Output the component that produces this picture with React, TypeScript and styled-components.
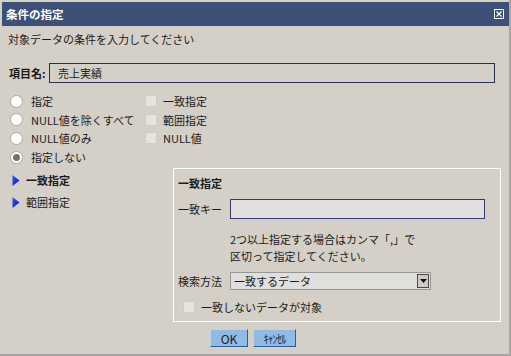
import { createGlobalStyle, styled } from "styled-components";

const GlobalStyle = createGlobalStyle`
  html, body {
    margin: 0;
    padding: 0;
    background: #d4d0c8;
  }
  body {
    font-family: "Noto Sans CJK JP", "Noto Sans", sans-serif;
    font-size: 11px;
    color: #1a1a1a;
  }
`;

const Dialog = styled.div`
  width: 511px;
  height: 356px;
  padding: 2px 0 0 2px;
  box-sizing: border-box;
  background: #d4d0c8;
  border-right: 2px solid #a8a6a2;
  border-bottom: 2px solid #a8a6a2;
  display: flex;
  flex-direction: column;
`;

const TitleBar = styled.div`
  height: 24px;
  background: #3d5078;
  color: #fff;
  font-weight: bold;
  font-size: 11.5px;
  display: flex;
  align-items: center;
  justify-content: space-between;
  padding: 0 5px 0 4px;
`;

const Body = styled.div`
  padding: 5px 0 0 6px;
  display: flex;
  flex-direction: column;
`;

const Intro = styled.div`
  line-height: 16px;
  height: 16px;
`;

const NameRow = styled.div`
  display: flex;
  align-items: center;
  margin-top: 16px;
`;

const NameLabel = styled.span`
  font-weight: bold;
  width: 40px;
  padding-left: 1px;
`;

const NameBox = styled.div`
  width: 436px;
  height: 18px;
  border: 1px solid #2c2f52;
  display: flex;
  align-items: center;
  padding-left: 8px;
`;

const OptionGrid = styled.div`
  display: grid;
  grid-template-columns: 135px 120px;
  grid-auto-rows: 18.6px;
  margin-top: 9px;
  padding-left: 2px;
`;

const Option = styled.label`
  display: flex;
  align-items: center;
  gap: 8px;
  line-height: 16px;
`;

const Check = styled.span`
  width: 12px;
  height: 12px;
  box-sizing: border-box;
  border-radius: 2px;
  background: #e6e4e0;
  border: 1px solid #cfccc6;
  flex-shrink: 0;
`;

const CheckOption = styled(Option)`
  gap: 6px;
`;

const Radio = styled.span<{ $checked?: boolean }>`
  width: 13px;
  height: 13px;
  box-sizing: border-box;
  border-radius: 50%;
  background: #fff;
  border: 1px solid #aaa8a4;
  display: flex;
  align-items: center;
  justify-content: center;
  &::after {
    content: "";
    width: 7px;
    height: 7px;
    border-radius: 50%;
    background: ${(p) => (p.$checked ? "#75716a" : "transparent")};
  }
`;

const Lower = styled.div`
  display: flex;
  margin-top: 2px;
`;

const Nav = styled.div`
  width: 165px;
  flex-shrink: 0;
  display: flex;
  flex-direction: column;
  padding-left: 4px;
  box-sizing: border-box;
  padding-top: 4px;
  gap: 6px;
`;

const NavItem = styled.div<{ $bold?: boolean }>`
  display: flex;
  align-items: center;
  gap: 6px;
  line-height: 16px;
  font-weight: ${(p) => (p.$bold ? "bold" : "normal")};
`;

const Panel = styled.div`
  width: 328px;
  height: 154px;
  flex-shrink: 0;
  border: 1px solid #fff;
  box-sizing: border-box;
  padding: 6px 0 0 4px;
  display: flex;
  flex-direction: column;
`;

const PanelTitle = styled.div`
  font-weight: bold;
  line-height: 16px;
`;

const FieldRow = styled.div<{ $top: number }>`
  display: flex;
  align-items: center;
  margin-top: ${(p) => p.$top}px;
`;

const FieldLabel = styled.span`
  width: 52px;
  line-height: 16px;
`;

const KeyInput = styled.div`
  width: 255px;
  height: 20px;
  box-sizing: border-box;
  background: #e0dfde;
  border: 1px solid #38386a;
`;

const Note = styled.div`
  margin: 12px 0 0 52px;
  line-height: 17px;
`;

const Select = styled.div`
  width: 201px;
  height: 18px;
  box-sizing: border-box;
  background: #e0dfde;
  border: 1px solid #9a9894;
  display: flex;
  align-items: center;
  justify-content: space-between;
  padding-left: 3px;
  line-height: 16px;
`;

const SelectArrow = styled.span`
  width: 12px;
  height: 14px;
  box-sizing: border-box;
  border: 1px solid #4a4a4a;
  background: #cfccc6;
  margin-right: 1px;
  display: flex;
  align-items: center;
  justify-content: center;
`;

const CheckRow = styled.div`
  display: flex;
  align-items: center;
  gap: 6px;
  margin: 9px 0 0 5px;
  line-height: 16px;
`;

const Buttons = styled.div`
  display: flex;
  justify-content: center;
  gap: 5px;
  margin-top: 7px;
  padding-right: 11px;
`;

const Button = styled.div<{ $w: number }>`
  width: ${(p) => p.$w}px;
  height: 18px;
  box-sizing: border-box;
  background: #8fbbe6;
  border-top: 1px solid #b8d4ef;
  border-left: 1px solid #b8d4ef;
  border-right: 1px solid #2d5d8f;
  border-bottom: 1px solid #2d5d8f;
  display: flex;
  align-items: center;
  justify-content: center;
  font-size: 12px;
  color: #222;
`;

const SmallText = styled.span`
  font-size: 12px;
  letter-spacing: -0.5px;
  display: inline-block;
  transform: scaleX(0.8);
`;

function CloseIcon() {
  return (
    <svg width="10" height="10" viewBox="0 0 10 10">
      <rect x="0.5" y="0.5" width="9" height="9" fill="none" stroke="#fff" strokeWidth="1" />
      <path d="M2.5 2.5 L7.5 7.5 M7.5 2.5 L2.5 7.5" stroke="#fff" strokeWidth="1.2" />
    </svg>
  );
}

function Arrow() {
  return (
    <svg width="8" height="11" viewBox="0 0 8 11">
      <defs>
        <linearGradient id="ag" x1="0" y1="0" x2="1" y2="1">
          <stop offset="0" stopColor="#3a5cff" />
          <stop offset="1" stopColor="#0010a0" />
        </linearGradient>
      </defs>
      <path d="M0.5 0 L7.5 5.5 L0.5 11 Z" fill="url(#ag)" />
    </svg>
  );
}

const radios = [
  { label: "指定", checked: false },
  { label: "NULL値を除くすべて", checked: false },
  { label: "NULL値のみ", checked: false },
  { label: "指定しない", checked: true },
];
const checks = ["一致指定", "範囲指定", "NULL値"];

export default function App() {
  return (
    <>
      <GlobalStyle />
      <Dialog>
        <TitleBar>
          <span>条件の指定</span>
          <CloseIcon />
        </TitleBar>
        <Body>
          <Intro>対象データの条件を入力してください</Intro>
          <NameRow>
            <NameLabel>項目名:</NameLabel>
            <NameBox>売上実績</NameBox>
          </NameRow>
          <OptionGrid>
            {radios.map((r, i) => [
              <Option key={"r" + i}>
                <Radio $checked={r.checked} />
                {r.label}
              </Option>,
              <CheckOption key={"c" + i}>
                {checks[i] ? (
                  <>
                    <Check />
                    {checks[i]}
                  </>
                ) : null}
              </CheckOption>,
            ])}
          </OptionGrid>
          <Lower>
            <Nav>
              <NavItem $bold>
                <Arrow />
                一致指定
              </NavItem>
              <NavItem>
                <Arrow />
                範囲指定
              </NavItem>
            </Nav>
            <Panel>
              <PanelTitle>一致指定</PanelTitle>
              <FieldRow $top={8}>
                <FieldLabel>一致キー</FieldLabel>
                <KeyInput />
              </FieldRow>
              <Note>
                2つ以上指定する場合はカンマ「,」で
                <br />
                区切って指定してください。
              </Note>
              <FieldRow $top={7}>
                <FieldLabel>検索方法</FieldLabel>
                <Select>
                  一致するデータ
                  <SelectArrow>
                    <svg width="7" height="4" viewBox="0 0 7 4">
                      <path d="M0 0 H7 L3.5 4 Z" fill="#111" />
                    </svg>
                  </SelectArrow>
                </Select>
              </FieldRow>
              <CheckRow>
                <Check />
                一致しないデータが対象
              </CheckRow>
            </Panel>
          </Lower>
          <Buttons>
            <Button $w={38}>OK</Button>
            <Button $w={43}>
              <SmallText>ｷｬﾝｾﾙ</SmallText>
            </Button>
          </Buttons>
        </Body>
      </Dialog>
    </>
  );
}
